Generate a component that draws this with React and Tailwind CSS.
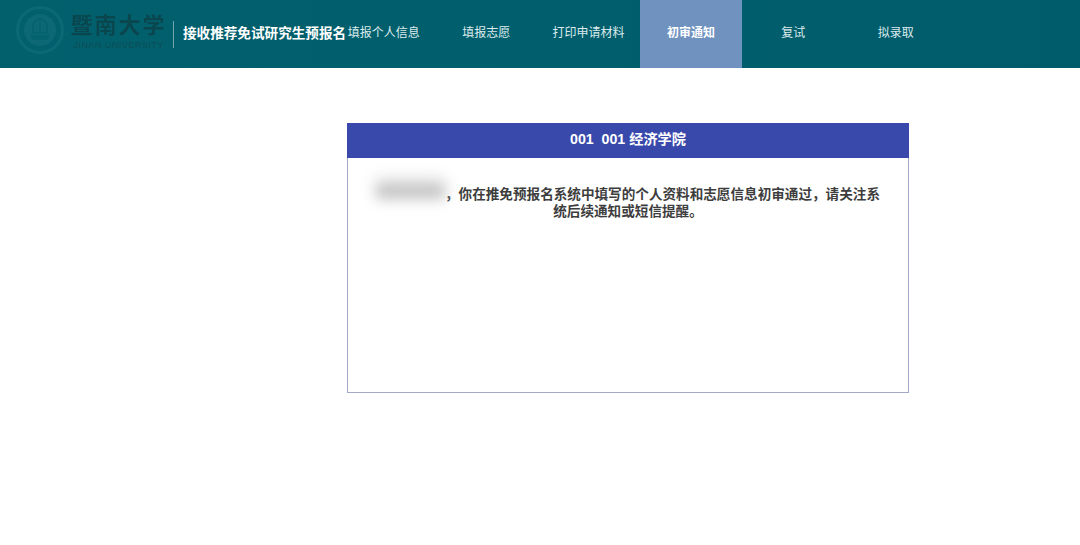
import React from "react";

const menus = ["填报个人信息", "填报志愿", "打印申请材料", "初审通知", "复试", "拟录取"];

const cjk = "font-['Liberation_Sans','Noto_Sans_CJK_SC',sans-serif]";

function Seal() {
  return (
    <svg width="48" height="48" viewBox="0 0 48 48" fill="none" className="mb-2 shrink-0">
      <circle cx="24" cy="24" r="22.5" stroke="#0b6874" strokeWidth="3" />
      <circle cx="24" cy="24" r="16" fill="#0b6874" />
      <path d="M14 29h20l-3 5H17z" fill="#04626f" />
      <path d="M17 27v-7a7 7 0 0 1 14 0v7z" stroke="#04626f" strokeWidth="1.5" />
      <path d="M24 14v13" stroke="#04626f" strokeWidth="1.2" />
    </svg>
  );
}

export default function App() {
  return (
    <div className={`min-h-[545px] bg-white ${cjk}`}>
      {/* Cabecera */}
      <header className="flex h-[68px] bg-gradient-to-r from-[#02606d] to-[#005c6b]">
        <div className="flex w-[332.6px] shrink-0 items-center pl-4">
          <Seal />
          <div className="mb-[6px] ml-2 flex w-[93px] shrink-0 flex-col items-center blur-[0.4px]">
            <span className="whitespace-nowrap text-[22px] leading-[28px] font-bold tracking-[2px] text-[#0a464e]">暨南大学</span>
            <span className="whitespace-nowrap text-[9px] leading-[10px] tracking-[0.5px] text-[#0b4c55]">JINAN UNIVERSITY</span>
          </div>
          <div className="ml-2 h-[27px] w-px shrink-0 bg-[#6fa5ac]" />
          <span className="ml-[9px] whitespace-nowrap text-[13.6px] font-bold text-white">接收推荐免试研究生预报名</span>
        </div>
        <nav className="flex">
          {menus.map((m) => (
            <div
              key={m}
              className={
                m === "初审通知"
                  ? "flex h-full w-[102.4px] items-center justify-center bg-[#7092bf] pb-[3px] text-[12px] font-bold text-white"
                  : "flex h-full w-[102.4px] items-center justify-center pb-[3px] text-[12px] text-[#dcebed]"
              }
            >
              {m}
            </div>
          ))}
        </nav>
      </header>

      {/* Tarjeta */}
      <div className="flex justify-end pt-[55px] pr-[171px]">
        <div className="h-[270px] w-[562px] border border-[#a3aac9]">
          <div className="-mx-px -mt-px flex h-[35px] items-center justify-center bg-[#3949ab] pb-[2px] text-[14.2px] font-bold whitespace-pre text-white">
            001  001 经济学院
          </div>
          <p className="px-[24px] pt-[28px] text-center text-[13.6px] leading-[17px] font-bold text-[#3d3d3d]">
            <span className="relative -top-[4px] inline-block h-[15px] w-[69px] bg-[#c2c2c2] align-middle shadow-[0_-7px_10px_#e8e8e8] blur-[7px]" />
            ，你在推免预报名系统中填写的个人资料和志愿信息初审通过，请关注系统后续通知或短信提醒。
          </p>
        </div>
      </div>
    </div>
  );
}
